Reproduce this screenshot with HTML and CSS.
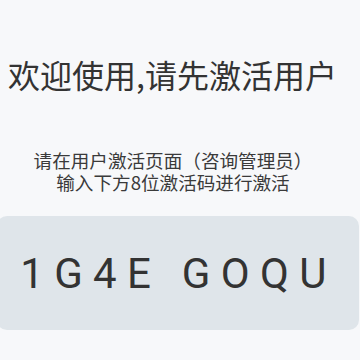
FILE: index.html
```html
<!DOCTYPE html>
<html lang="zh-CN">
<head>
  <meta charset="UTF-8">
  <title>激活用户</title>
  <link rel="stylesheet" href="styles.css">
</head>
<body>
  <div class="page">
    <h2 class="title">欢迎使用,请先激活用户</h2>
    <p class="tip">请在用户激活页面（咨询管理员）<br>输入下方8位激活码进行激活</p>
    <div class="code-box">
      <span class="code">1G4E GOQU</span>
    </div>
  </div>
</body>
</html>
```

FILE: styles.css
```css
body {
  margin: 0;
  background: #f7f8fa;
  font-family: "Noto Sans CJK SC", "Noto Sans", sans-serif;
  color: #333;
  overflow: hidden;
}

.page {
  display: flex;
  flex-direction: column;
  width: 360px;
  height: 360px;
}

.title {
  margin: 50px 0 0 8px;
  font-size: 32px;
  font-weight: normal;
  line-height: 48px;
  white-space: nowrap;
}

.tip {
  margin: 51px 14px 0 0;
  font-size: 18.6px;
  line-height: 22px;
  text-align: center;
  color: #3a3a3a;
}

.code-box {
  margin: 23px 0 0 -3px;
  width: 362px;
  height: 114px;
  background: #dfe5ea;
  border-radius: 10px;
  display: flex;
  align-items: center;
  justify-content: center;
}

.code {
  font-family: Roboto, "Noto Sans", sans-serif;
  font-size: 42px;
  letter-spacing: 10.3px;
  padding-left: 1px;
  color: #333;
}
```
